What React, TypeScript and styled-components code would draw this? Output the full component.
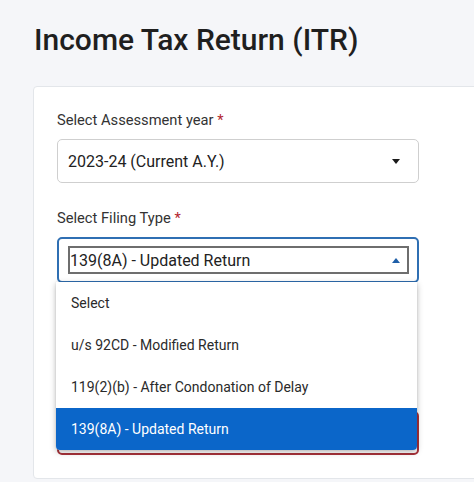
import React from "react";
import styled, { createGlobalStyle } from "styled-components";

const GlobalStyle = createGlobalStyle`
  html, body {
    margin: 0;
    padding: 0;
    background: #f5f6f9;
    font-family: Roboto, "Liberation Sans", Arial, sans-serif;
  }
`;

const Page = styled.div`
  height: 482px;
  overflow: hidden;
  padding: 22px 0 0 33px;
  box-sizing: border-box;
`;

const Title = styled.h1`
  margin: 0 0 28px 1px;
  font-size: 30px;
  line-height: 36px;
  font-weight: 500;
  color: #1f1f1f;
`;

const Card = styled.div`
  background: #fff;
  border: 1px solid #e3e6ea;
  border-radius: 4px;
  margin-right: -20px;
  padding: 24px 23px 23px;
  display: flex;
  flex-direction: column;
`;

const Field = styled.div<{ $gap?: number }>`
  display: flex;
  flex-direction: column;
  width: 362px;
  margin-top: ${(p) => p.$gap ?? 0}px;
`;

const Label = styled.label`
  font-size: 14.7px;
  line-height: 18px;
  color: #333;
  margin-bottom: 10px;
  span {
    color: #b3262f;
  }
`;

const SelectBox = styled.div<{ $state?: "idle" | "open" | "error" }>`
  position: relative;
  box-sizing: border-box;
  height: ${(p) => (p.$state === "open" ? 46 : 44)}px;
  border: ${(p) =>
    p.$state === "open"
      ? "2px solid #2f6fb3"
      : p.$state === "error"
      ? "2px solid #a8323a"
      : "1px solid #cfcfcf"};
  border-radius: 5px;
  background: #fff;
  display: flex;
  align-items: center;
  padding: ${(p) => (p.$state === "open" ? "7px 8px 7px 9px" : "0 18px 0 10px")};
`;

const Value = styled.div`
  flex: 1;
  font-size: 16px;
  color: #222;
  white-space: nowrap;
`;

const FocusRing = styled.div`
  flex: 1;
  height: 100%;
  box-sizing: border-box;
  border: 2px solid #6e6e6e;
  display: flex;
  align-items: center;
  padding: 0 7px 0 0;
`;

const Caret = styled.svg`
  flex: none;
  width: 8px;
  height: 5px;
`;

const Menu = styled.ul`
  position: absolute;
  top: calc(100% + 1px);
  left: -3px;
  width: 361px;
  margin: 0;
  padding: 0;
  list-style: none;
  background: #fff;
  border-radius: 0 0 4px 4px;
  box-shadow: 0 2px 6px rgba(0, 0, 0, 0.28), 0 0 2px rgba(0, 0, 0, 0.12);
  overflow: hidden;
  z-index: 2;
`;

const Option = styled.li<{ $active?: boolean }>`
  height: 42px;
  display: flex;
  align-items: center;
  padding: 0 0 0 15px;
  box-sizing: border-box;
  font-size: 14px;
  color: ${(p) => (p.$active ? "#fff" : "#2a2a2a")};
  background: ${(p) => (p.$active ? "#0b66c9" : "transparent")};
`;

const options = [
  "Select",
  "u/s 92CD - Modified Return",
  "119(2)(b) - After Condonation of Delay",
  "139(8A) - Updated Return",
];

const App = () => {
  return (
    <Page>
      <GlobalStyle />
      <Title>Income Tax Return (ITR)</Title>
      <Card>
        <Field>
          <Label>
            Select Assessment year <span>*</span>
          </Label>
          <SelectBox $state="idle">
            <Value>2023-24 (Current A.Y.)</Value>
            <Caret viewBox="0 0 8 5">
              <path d="M0 0 H8 L4 5 Z" fill="#1a1a1a" />
            </Caret>
          </SelectBox>
        </Field>
        <Field $gap={26}>
          <Label>
            Select Filing Type <span>*</span>
          </Label>
          <SelectBox $state="open">
            <FocusRing>
              <Value>139(8A) - Updated Return</Value>
              <Caret viewBox="0 0 8 5">
                <path d="M0 5 H8 L4 0 Z" fill="#1f5fa8" />
              </Caret>
            </FocusRing>
            <Menu>
              {options.map((o, i) => (
                <Option key={o} $active={i === options.length - 1}>
                  {o}
                </Option>
              ))}
            </Menu>
          </SelectBox>
        </Field>
        <Field $gap={128}>
          <SelectBox $state="error" />
        </Field>
      </Card>
    </Page>
  );
};

export default App;
